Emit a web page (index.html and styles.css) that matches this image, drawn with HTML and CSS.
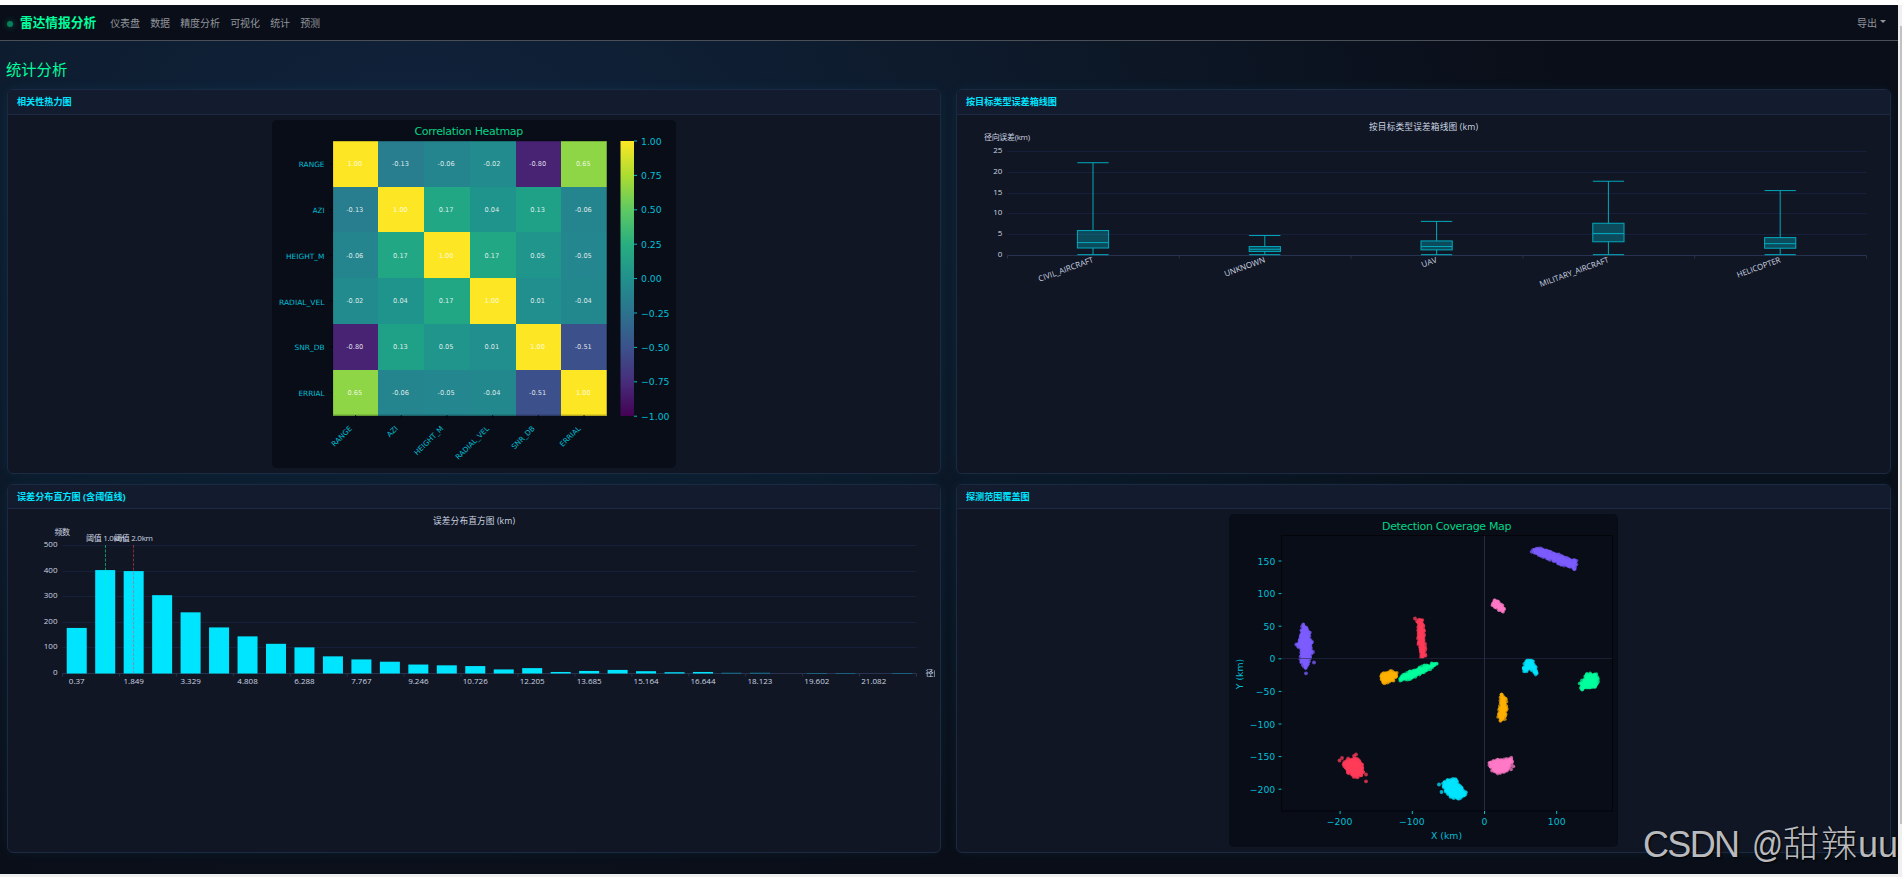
FILE: index.html
```html
<!DOCTYPE html>
<html lang="zh-CN">
<head>
  <meta charset="UTF-8">
  <title>雷达情报分析</title>
  <link rel="stylesheet" href="styles.css">
</head>
<body>

  <div class="window">
    <div class="app">
      <nav class="navbar">
        <span class="radar-dot"></span>
        <span class="brand">雷达情报分析</span>
        <div class="nav-links">
          <a>仪表盘</a>
          <a>数据</a>
          <a>精度分析</a>
          <a>可视化</a>
          <a>统计</a>
          <a>预测</a>
        </div>
        <a class="export">导出<span class="caret"></span></a>
      </nav>

      <main>
        <h1>统计分析</h1>

        <div class="cards">
          <section class="card">
            <div class="card-header">相关性热力图</div>
            <div class="card-body">
              <svg id="heatmap" class="figure" width="404" height="348" viewBox="272 120 404 348"></svg>
            </div>
          </section>

          <section class="card">
            <div class="card-header">按目标类型误差箱线图</div>
            <div class="card-body">
              <svg id="boxplot" class="chart" width="923" height="213" viewBox="962 120 923 213"></svg>
            </div>
          </section>

          <section class="card">
            <div class="card-header compact">误差分布直方图 (含阈值线)</div>
            <div class="card-body">
              <svg id="histogram" class="chart" width="922" height="187" viewBox="13 514 922 187"></svg>
            </div>
          </section>

          <section class="card">
            <div class="card-header compact">探测范围覆盖图</div>
            <div class="card-body">
              <svg id="coverage" class="figure" width="389" height="333" viewBox="1229 514 389 333"></svg>
            </div>
          </section>
        </div>
      </main>
    </div>

    <div class="scrollbar"><div class="thumb"></div></div>
  </div>

  <svg class="watermark" width="260" height="50" viewBox="0 0 260 50">
    <text x="1" y="37" textLength="97">CSDN</text>
    <text x="110" y="37" textLength="31" lengthAdjust="spacingAndGlyphs">@</text>
    <text x="141" y="37" textLength="74" class="cjk">甜辣</text>
    <text x="216" y="37" textLength="40">uu</text>
  </svg>

  <script src="charts.js"></script>
</body>
</html>
```
FILE: styles.css
```css
body {
  margin: 0;
  padding-top: 5px;
  height: 872px;
  overflow: hidden;
  background: #fff;
  font-family: "Open Sans", "Noto Sans CJK SC", sans-serif;
  box-sizing: content-box;
}

.window {
  display: flex;
  height: 869px;
  border-bottom: 3px solid #f0f0f0;
}

.app {
  width: 1898px;
  background: radial-gradient(ellipse 1150px 760px at 22% 18%, #10233c 0%, #0d1a2b 50%, #0a0e18 100%);
}

.scrollbar {
  width: 4px;
  background: #f0f0f0;
}

.thumb {
  width: 2px;
  height: 798px;
  margin: 21px 0 0 2px;
  background: #c1c1c1;
}

.navbar {
  display: flex;
  align-items: center;
  height: 35px;
  padding: 0 12px 0 7px;
  background: #090e19;
  border-bottom: 1px solid #4b4f57;
}

.radar-dot {
  width: 6px;
  height: 6px;
  margin-top: 3px;
  border-radius: 50%;
  background: #04805a;
  box-shadow: 0 0 6px rgba(0, 255, 157, 0.35);
}

.brand {
  margin: -2px 0 0 7px;
  font-size: 12.7px;
  font-weight: bold;
  color: #00ff9d;
}

.nav-links {
  display: flex;
  gap: 10px;
  margin: -1px 0 0 14px;
}

.navbar a {
  font-size: 10px;
  color: #92959b;
}

.export {
  display: flex;
  align-items: center;
  margin: -1px 0 0 auto;
}

.caret {
  margin: 0 0 2px 3px;
  border: 3px solid transparent;
  border-top-color: #92959b;
  border-bottom: 0;
}

main {
  padding: 0 7px;
}

h1 {
  margin: 0 0 0 -1px;
  padding-top: 17px;
  height: 31px;
  line-height: 23px;
  font-size: 15.3px;
  font-weight: 400;
  color: #00ff9d;
}

.cards {
  display: grid;
  grid-template-columns: 934px 935px;
  grid-template-rows: 385px 369px;
  gap: 10px 15px;
}

.card {
  box-sizing: border-box;
  overflow: hidden;
  background: #101624;
  border: 1px solid #1b2942;
  border-radius: 6px;
  box-shadow: 0 0 14px rgba(0, 229, 255, 0.06);
}

.card-header {
  height: 24px;
  line-height: 24px;
  padding-left: 9px;
  font-size: 9.1px;
  font-weight: bold;
  color: #00e5ff;
  background: #131b2f;
  border-bottom: 1px solid #1b2942;
}

.card-header.compact {
  height: 23px;
}

.card-body {
  padding: 5px;
  text-align: center;
}

.chart,
.figure {
  display: block;
  margin: 0 auto;
  overflow: hidden;
}

.chart text {
  font-size: 8px;
  fill: #ccd4e0;
}

.chart .title {
  font-size: 8.7px;
}

.grid-line {
  stroke: #17203a;
}

.axis {
  stroke: #26324f;
}

.bar {
  fill: #00e5ff;
}

.box,
.whisker {
  fill: rgba(0, 229, 255, 0.26);
  stroke: #02a9bd;
}

.mark-green {
  stroke: #00ff9d;
  stroke-opacity: 0.55;
  stroke-dasharray: 3 1.5;
}

.mark-red {
  stroke: #ff3b58;
  stroke-opacity: 0.5;
  stroke-dasharray: 3 1.5;
}

.figure {
  border-radius: 5px;
  background: #090d18;
}

.figure text {
  font-family: "DejaVu Sans", sans-serif;
  font-size: 9.3px;
  fill: #03bed3;
}

.figure .title {
  font-size: 11px;
  fill: #02d585;
}

.figure .small {
  font-size: 7.3px;
}

.figure .cell-value {
  font-size: 6.6px;
  fill: #fff;
  fill-opacity: 0.85;
}

.figure .tick {
  stroke: #03bed3;
}

.frame {
  fill: none;
  stroke: #03050a;
}

.zero-line {
  stroke: #262c48;
}

.watermark {
  position: absolute;
  left: 1642px;
  top: 820px;
  overflow: visible;
}

.watermark text {
  font-family: "Liberation Sans", sans-serif;
  font-size: 36px;
  fill: #b9babd;
  text-shadow: 1px 1px 2px #000;
}

.watermark .cjk {
  font-family: "Noto Sans CJK SC", sans-serif;
  font-weight: 300;
}
```
FILE: charts.js
```js
const NS = "http://www.w3.org/2000/svg";

function add(parent, tag, attrs, text) {
  const el = document.createElementNS(NS, tag);
  for (const key in attrs) el.setAttribute(key, attrs[key]);
  if (text !== undefined) el.textContent = text;
  parent.appendChild(el);
  return el;
}

function line(parent, x1, y1, x2, y2, cls) {
  add(parent, "line", { x1, y1, x2, y2, class: cls });
}

// ---- correlation heatmap ----
function drawHeatmap() {
  const svg = document.getElementById("heatmap");
  const names = ["RANGE", "AZI", "HEIGHT_M", "RADIAL_VEL", "SNR_DB", "ERRIAL"];
  const labelWidths = [25.7, 11.7, 38.5, 45.5, 30, 26];
  const values = [
    [1, -0.13, -0.06, -0.02, -0.8, 0.65],
    [-0.13, 1, 0.17, 0.04, 0.13, -0.06],
    [-0.06, 0.17, 1, 0.17, 0.05, -0.05],
    [-0.02, 0.04, 0.17, 1, 0.01, -0.04],
    [-0.8, 0.13, 0.05, 0.01, 1, -0.51],
    [0.65, -0.06, -0.05, -0.04, -0.51, 1]
  ];
  const colors = {
    "1": "#fde725", "-0.13": "#287d8e", "-0.06": "#25858e", "-0.05": "#24868e", "-0.04": "#23888e",
    "-0.02": "#228b8d", "0.01": "#218f8d", "0.04": "#1f948c", "0.05": "#1f958b", "0.13": "#1fa188",
    "0.17": "#22a785", "0.65": "#8ed645", "-0.8": "#482374", "-0.51": "#3c508b"
  };
  const x0 = 332.7, y0 = 141, size = 45.7;

  add(svg, "text", { x: 414.5, y: 135.3, textLength: 108.7, class: "title" }, "Correlation Heatmap");
  values.forEach((row, r) => {
    row.forEach((v, c) => {
      add(svg, "rect", {
        x: x0 + c * size, y: y0 + r * size, width: size + 0.3, height: size + 0.3,
        fill: colors[v], "shape-rendering": "crispEdges"
      });
    });
  });
  values.forEach((row, r) => {
    row.forEach((v, c) => {
      add(svg, "text", {
        x: x0 + (c + 0.5) * size - 0.8, y: y0 + (r + 0.5) * size + 2.4,
        "text-anchor": "middle", class: "cell-value"
      }, v.toFixed(2));
    });
  });
  add(svg, "rect", { x: x0, y: y0, width: size * 6, height: size * 6, class: "frame", "stroke-opacity": 0.4 });

  names.forEach((name, i) => {
    const mid = (i + 0.5) * size;
    line(svg, x0 - 3, y0 + mid, x0, y0 + mid, "frame");
    line(svg, x0 + mid, y0 + 6 * size, x0 + mid, y0 + 6 * size + 3, "frame");
    add(svg, "text", {
      x: 324.5 - labelWidths[i], y: y0 + mid + 3.6, textLength: labelWidths[i],
      lengthAdjust: "spacingAndGlyphs", class: "small"
    }, name);
    add(svg, "text", {
      x: 0, y: 0, "text-anchor": "end", class: "small",
      transform: `translate(${x0 + mid - 3} 429) rotate(-45)`
    }, name);
  });

  const defs = add(svg, "defs", {});
  const grad = add(defs, "linearGradient", { id: "viridis", x1: 0, y1: 0, x2: 0, y2: 1 });
  ["#fde725", "#addc30", "#5ec962", "#28ae80", "#21918c", "#2c728e", "#3b528b", "#472d7b", "#440154"]
    .forEach((c, i) => add(grad, "stop", { offset: i / 8, "stop-color": c }));
  add(svg, "rect", { x: 620.5, y: 141, width: 13.5, height: 275, fill: "url(#viridis)" });
  for (let i = 0; i < 9; i++) {
    const v = 1 - i * 0.25;
    const y = 141 + i * 34.4;
    line(svg, 634, y, 637, y, "tick");
    add(svg, "text", { x: 641, y: y + 3.6 }, v < 0 ? "−" + Math.abs(v).toFixed(2) : v.toFixed(2));
  }
}

// ---- boxplot ----
function drawBoxplot() {
  const svg = document.getElementById("boxplot");
  // max, q3, median, q1, min, label length
  const data = [
    ["CIVIL_AIRCRAFT", 22.3, 6, 3.1, 1.8, 0.2, 58],
    ["UNKNOWN", 4.8, 2.15, 1.5, 0.95, 0.2, 43],
    ["UAV", 8.2, 3.5, 2.15, 1.35, 0.2, 16],
    ["MILITARY_AIRCRAFT", 17.85, 7.75, 5.3, 3.3, 0.2, 73],
    ["HELICOPTER", 15.6, 4.3, 2.85, 1.75, 0.2, 46]
  ];
  const left = 1007.5, right = 1866.5, bottom = 255.5, step = (right - left) / 5;
  const py = v => bottom - v * 4.16;

  add(svg, "text", { x: 1369, y: 130, textLength: 109, class: "title" }, "按目标类型误差箱线图 (km)");
  add(svg, "text", { x: 984, y: 140, textLength: 46 }, "径向误差(km)");
  for (let v = 0; v <= 25; v += 5) {
    const y = Math.floor(py(v)) + 0.5;
    line(svg, left, y, right, y, v ? "grid-line" : "axis");
    add(svg, "text", { x: 1002.3, y: y + 1.8, "text-anchor": "end" }, v);
  }
  for (let i = 0; i <= 5; i++) {
    line(svg, left + i * step, bottom, left + i * step, bottom + 3, "axis");
  }
  data.forEach((d, i) => {
    const cx = left + (i + 0.5) * step - 0.4;
    const l = cx - 15.6, r = cx + 15.6;
    line(svg, cx, py(d[1]), cx, py(d[2]), "whisker");
    line(svg, cx, py(d[4]), cx, py(d[5]), "whisker");
    line(svg, l, py(d[1]), r, py(d[1]), "whisker");
    line(svg, l, py(d[5]), r, py(d[5]), "whisker");
    add(svg, "rect", { x: l, y: py(d[2]), width: 31.2, height: py(d[4]) - py(d[2]), class: "box" });
    line(svg, l, py(d[3]), r, py(d[3]), "whisker");
    add(svg, "text", {
      x: -d[6], y: 0, textLength: d[6], lengthAdjust: "spacingAndGlyphs",
      transform: `translate(${cx + 1} 262) rotate(-20)`
    }, d[0]);
  });
}

// ---- histogram ----
function drawHistogram() {
  const svg = document.getElementById("histogram");
  const counts = [178, 404, 400, 306, 239, 180, 145, 116, 102, 67, 55, 46, 35, 32, 29,
    16, 21, 6, 10, 14, 9, 5, 6, 3, 3, 0, 2, 2, 0, 2];
  const labels = ["0.37", "1.849", "3.329", "4.808", "6.288", "7.767", "9.246", "10.726",
    "12.205", "13.685", "15.164", "16.644", "18.123", "19.602", "21.082"];
  const left = 62.5, right = 916.5, bottom = 673.5, step = (right - left) / 30;

  add(svg, "text", { x: 433, y: 524, textLength: 82, class: "title" }, "误差分布直方图 (km)");
  add(svg, "text", { x: 54.5, y: 534.5, textLength: 15.5 }, "频数");
  for (let v = 0; v <= 500; v += 100) {
    const y = Math.floor(bottom - v * 0.256) + 0.5;
    line(svg, left, y, right, y, v ? "grid-line" : "axis");
    add(svg, "text", { x: 57.5, y: y + 1.8, "text-anchor": "end" }, v);
  }
  for (let i = 0; i <= 30; i += 2) {
    line(svg, left + i * step, bottom, left + i * step, bottom + 3, "axis");
  }
  counts.forEach((n, i) => {
    add(svg, "rect", {
      x: left + (i + 0.5) * step - 10, y: bottom - n * 0.256, width: 20, height: n * 0.256,
      class: "bar", "fill-opacity": n < 5 ? 0.5 : 1
    });
  });
  labels.forEach((t, i) => {
    add(svg, "text", { x: left + (i * 2 + 0.5) * step, y: 684, "text-anchor": "middle" }, t);
  });
  line(svg, 105.5, 545, 105.5, 673, "mark-green");
  line(svg, 133.5, 545, 133.5, 673, "mark-red");
  add(svg, "text", { x: 86, y: 540.5, textLength: 39 }, "阈值 1.0km");
  add(svg, "text", { x: 114, y: 540.5, textLength: 39 }, "阈值 2.0km");
  add(svg, "text", { x: 925.5, y: 675.5 }, "径向误差(km)");
}

// ---- detection coverage ----
function drawCoverage() {
  const svg = document.getElementById("coverage");
  const violet = "#7c5cff", red = "#ff3b58", orange = "#ffb000";
  const green = "#00ff9d", cyan = "#00e5ff", pink = "#ff79c6";
  const clusters = [
    { color: violet, edge: [[1532.5, 551], [1536, 548.5], [1545, 550], [1556, 554.5], [1567, 558.5], [1573, 561], [1576, 560], [1575, 568.5], [1571, 567.5], [1562, 564], [1552, 559.5], [1540, 555.5]] },
    { color: pink, edge: [[1493.5, 601], [1497, 601], [1504.5, 609], [1502.5, 611], [1499, 610], [1493, 605]] },
    { color: violet, edge: [[1303.5, 624.5], [1308.5, 631], [1310.5, 642], [1310.5, 654], [1307.5, 663], [1305.5, 668.5], [1301, 661], [1301.5, 650], [1298, 645], [1301, 633]], extra: [[1306, 673.3], [1314, 662.5], [1296.3, 644.5], [1312, 642], [1313, 652]] },
    { color: red, edge: [[1418.5, 620.5], [1422.5, 620.5], [1424, 638], [1425, 656], [1421, 656.5], [1418.5, 640]], extra: [[1415, 618.5], [1417, 621]] },
    { color: orange, edge: [[1381, 675], [1391.5, 671.5], [1396.5, 673.5], [1394, 679.5], [1384, 683], [1381.5, 680]] },
    { color: green, edge: [[1400.5, 677], [1410, 672], [1425, 666], [1436, 663.5], [1436, 664.5], [1425, 671], [1412, 678], [1400.5, 680.5]] },
    { color: cyan, edge: [[1527.5, 660.5], [1532, 660.5], [1535, 668], [1536.5, 674.5], [1531, 668], [1525, 671.5], [1524, 669], [1525, 664]] },
    { color: green, edge: [[1580.5, 684], [1588, 674], [1596.5, 674.5], [1597.5, 680], [1596, 687], [1588, 687], [1582, 690]] },
    { color: orange, edge: [[1501.5, 694], [1505, 699], [1506.5, 708], [1504, 719], [1500.5, 720], [1498.5, 717], [1500.5, 707]] },
    { color: red, edge: [[1349, 759], [1356, 758.5], [1360.5, 762], [1363.5, 771], [1361, 776], [1355, 777], [1348, 772], [1343, 763.5]], extra: [[1366, 781.3], [1339.5, 760.5], [1342, 758], [1356, 754.5], [1354, 756], [1366, 774.5]] },
    { color: cyan, edge: [[1443, 784.5], [1449, 779.5], [1454.5, 779.5], [1466, 794], [1460, 798], [1450.5, 797], [1444, 788]], extra: [[1439, 784.5], [1441.5, 792]] },
    { color: pink, edge: [[1489.5, 762.5], [1496, 760], [1504, 760.5], [1511, 758.5], [1512, 761.5], [1507, 770.5], [1498, 773], [1492.5, 770]], extra: [[1511, 769.3], [1513.3, 766.3]] }
  ];

  let seed = 7;
  const rand = () => (seed = (seed * 16807) % 2147483647) / 2147483647;

  add(svg, "text", { x: 1382, y: 529.5, textLength: 129.5, class: "title" }, "Detection Coverage Map");
  line(svg, 1484.5, 536, 1484.5, 811, "zero-line");
  clusters.forEach(c => {
    add(svg, "polygon", { points: c.edge.join(" "), fill: c.color });
    // points along the rim give the cloud its ragged edge
    c.edge.forEach((p, i) => {
      const q = c.edge[(i + 1) % c.edge.length];
      const n = Math.ceil(Math.hypot(q[0] - p[0], q[1] - p[1]) / 1.3);
      for (let k = 0; k < n; k++) {
        add(svg, "circle", {
          cx: p[0] + (q[0] - p[0]) * k / n + rand() * 2 - 1,
          cy: p[1] + (q[1] - p[1]) * k / n + rand() * 2 - 1,
          r: 1.8, fill: c.color, "fill-opacity": 0.7
        });
      }
    });
    (c.extra || []).forEach(p => {
      add(svg, "circle", { cx: p[0], cy: p[1], r: 1.9, fill: c.color, "fill-opacity": 0.75 });
    });
  });
  add(svg, "line", { x1: 1282, y1: 658.5, x2: 1612, y2: 658.5, class: "zero-line", "stroke-opacity": 0.6 });
  add(svg, "rect", { x: 1281.5, y: 535.5, width: 331, height: 275.5, class: "frame" });

  const fmt = v => v < 0 ? "−" + -v : v;
  for (let v = -200; v <= 100; v += 100) {
    const x = 1484.5 + v * 0.722;
    line(svg, x, 811, x, 814, "tick");
    add(svg, "text", { x: x - (v < 0 ? 0.5 : 0), y: 824.8, "text-anchor": "middle" }, fmt(v));
  }
  for (let v = -200; v <= 150; v += 50) {
    const y = 658.8 - v * 0.652;
    line(svg, 1278.5, y, 1281.5, y, "tick");
    add(svg, "text", { x: 1275.3, y: y + 3.6, "text-anchor": "end" }, fmt(v));
  }
  add(svg, "text", { x: 1446.5, y: 838.8, "text-anchor": "middle" }, "X (km)");
  add(svg, "text", { "text-anchor": "middle", transform: "translate(1242.5 674) rotate(-90)" }, "Y (km)");
}

drawHeatmap();
drawBoxplot();
drawHistogram();
drawCoverage();
```
